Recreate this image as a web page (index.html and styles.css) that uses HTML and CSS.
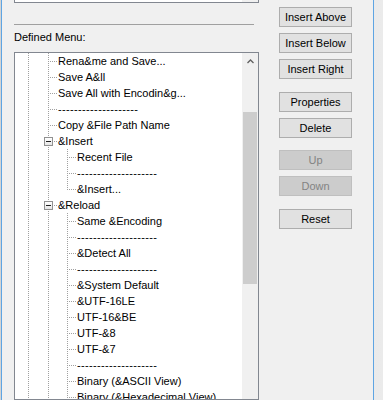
FILE: index.html
```html
<!DOCTYPE html>
<html lang="en">
  <head>
    <meta charset="UTF-8">
    <meta name="viewport" content="width=device-width, initial-scale=1.0">
    <title>Customize Menu</title>
    <link rel="stylesheet" href="styles.css">
  </head>
  <body>
    <main class="window">
      <section class="left-pane">
        <div class="list-box">
          <div class="list-rows">
            <div class="list-item">Sync Vertical Scroll (&amp;y)</div>
          </div>
          <div class="list-scroll"></div>
        </div>

        <hr class="separator">

        <div class="label">Defined Menu:</div>

        <div class="tree-box">
          <div class="tree">
            <div class="row"><span class="g v"></span><span class="g t"></span><span class="text">Rena&amp;me and Save...</span></div>
            <div class="row"><span class="g v"></span><span class="g t"></span><span class="text">Save A&amp;ll</span></div>
            <div class="row"><span class="g v"></span><span class="g t"></span><span class="text">Save All with Encodin&amp;g...</span></div>
            <div class="row"><span class="g v"></span><span class="g t"></span><span class="text sep">--------------------</span></div>
            <div class="row"><span class="g v"></span><span class="g t"></span><span class="text">Copy &amp;File Path Name</span></div>
            <div class="row"><span class="g v"></span><span class="g t"><i class="box"></i></span><span class="text">&amp;Insert</span></div>
            <div class="row"><span class="g v"></span><span class="g v"></span><span class="g t"></span><span class="text">Recent File</span></div>
            <div class="row"><span class="g v"></span><span class="g v"></span><span class="g t"></span><span class="text sep">--------------------</span></div>
            <div class="row"><span class="g v"></span><span class="g v"></span><span class="g l"></span><span class="text">&amp;Insert...</span></div>
            <div class="row"><span class="g v"></span><span class="g t"><i class="box"></i></span><span class="text">&amp;Reload</span></div>
            <div class="row"><span class="g v"></span><span class="g v"></span><span class="g t"></span><span class="text">Same &amp;Encoding</span></div>
            <div class="row"><span class="g v"></span><span class="g v"></span><span class="g t"></span><span class="text sep">--------------------</span></div>
            <div class="row"><span class="g v"></span><span class="g v"></span><span class="g t"></span><span class="text">&amp;Detect All</span></div>
            <div class="row"><span class="g v"></span><span class="g v"></span><span class="g t"></span><span class="text sep">--------------------</span></div>
            <div class="row"><span class="g v"></span><span class="g v"></span><span class="g t"></span><span class="text">&amp;System Default</span></div>
            <div class="row"><span class="g v"></span><span class="g v"></span><span class="g t"></span><span class="text">&amp;UTF-16LE</span></div>
            <div class="row"><span class="g v"></span><span class="g v"></span><span class="g t"></span><span class="text">UTF-16&amp;BE</span></div>
            <div class="row"><span class="g v"></span><span class="g v"></span><span class="g t"></span><span class="text">UTF-&amp;8</span></div>
            <div class="row"><span class="g v"></span><span class="g v"></span><span class="g t"></span><span class="text">UTF-&amp;7</span></div>
            <div class="row"><span class="g v"></span><span class="g v"></span><span class="g t"></span><span class="text sep">--------------------</span></div>
            <div class="row"><span class="g v"></span><span class="g v"></span><span class="g t"></span><span class="text">Binary (&amp;ASCII View)</span></div>
            <div class="row"><span class="g v"></span><span class="g v"></span><span class="g t"></span><span class="text">Binary (&amp;Hexadecimal View)</span></div>
          </div>

          <div class="scrollbar">
            <div class="arrow">
              <svg width="7" height="5" viewBox="0 0 7 5"><polyline points="0.5,4 3.5,1 6.5,4" fill="none" stroke="#606060" stroke-width="1.3"/></svg>
            </div>
            <div class="thumb"></div>
          </div>
        </div>
      </section>

      <section class="buttons">
        <button>Insert Above</button>
        <button>Insert Below</button>
        <button>Insert Right</button>
        <button class="group">Properties</button>
        <button>Delete</button>
        <button class="group-small" disabled>Up</button>
        <button disabled>Down</button>
        <button class="group">Reset</button>
      </section>
    </main>
  </body>
</html>
```

FILE: styles.css
```css
html, body {
  margin: 0;
  padding: 0;
  height: 400px;
  overflow: hidden;
}

body {
  background: linear-gradient(to right, #d4d4d4, #ebebeb);
  font-family: "Liberation Sans", Arial, sans-serif;
  font-size: 11px;
  color: #000000;
}

.window {
  display: flex;
  width: 359px;
  height: 400px;
  margin-left: 1px;
  padding-left: 12px;
  background-color: #f0f0f0;
  border-left: 1px solid #5fa5e3;
  border-right: 1px solid #5fa5e3;
}

.left-pane {
  width: 245px;
  display: flex;
  flex-direction: column;
}

/* list box cut off at the top of the picture */
.list-box {
  display: flex;
  height: 41px;
  margin-top: -37px;
  box-sizing: border-box;
  background-color: #ffffff;
  border: 1px solid #828790;
}

.list-rows {
  flex: 1;
  display: flex;
  flex-direction: column;
  justify-content: flex-end;
  padding: 0 0 1px 4px;
}

.list-item {
  line-height: 14px;
}

.list-scroll {
  width: 16px;
  background-color: #f0f0f0;
}

.separator {
  width: 240px;
  height: 0;
  margin: 21px 0 0 0;
  border: none;
  border-top: 1px solid #a0a0a0;
}

.label {
  line-height: 14px;
  margin-top: 5px;
}

.tree-box {
  display: flex;
  height: 360px;
  margin-top: 8px;
  box-sizing: border-box;
  background-color: #ffffff;
  border: 1px solid #828790;
  overflow: hidden;
}

.tree {
  flex: 1;
  padding-left: 3px;
}

.row {
  display: flex;
  height: 16px;
  line-height: 16px;
  white-space: nowrap;
}

.g {
  position: relative;
  width: 19px;
  height: 16px;
  flex: none;
}

.g:first-child {
  width: 20px;
}

.v::before, .t::before, .l::before {
  content: "";
  position: absolute;
  left: 10px;
  top: 0;
  width: 1px;
  height: 16px;
  background: repeating-linear-gradient(to bottom, #a0a0a0 0 1px, transparent 1px 2px);
}

.l::before {
  height: 9px;
}

.t::after, .l::after {
  content: "";
  position: absolute;
  left: 11px;
  top: 8px;
  width: 8px;
  height: 1px;
  background: repeating-linear-gradient(to right, transparent 0 1px, #a0a0a0 1px 2px);
}

.box {
  position: absolute;
  left: 6px;
  top: 4px;
  width: 7px;
  height: 7px;
  z-index: 1;
  border: 1px solid #919191;
  background: linear-gradient(to bottom, #ffffff, #e6e6e6);
}

.box::after {
  content: "";
  position: absolute;
  left: 1px;
  top: 3px;
  width: 5px;
  height: 1px;
  background-color: #1e1e1e;
}

.text {
  padding-left: 1px;
}

.sep {
  letter-spacing: 0.35px;
}

.scrollbar {
  width: 16px;
  flex: none;
  background-color: #f0f0f0;
}

.arrow {
  display: flex;
  justify-content: center;
  align-items: center;
  height: 17px;
}

.arrow svg {
  display: block;
}

.thumb {
  width: 14px;
  height: 172px;
  margin: 42px 0 0 1px;
  background-color: #cdcdcd;
}

.buttons {
  display: flex;
  flex-direction: column;
  gap: 6px;
  width: 73px;
  margin-left: 20px;
  padding-top: 7px;
}

button {
  display: block;
  width: 73px;
  height: 20px;
  padding: 0;
  font-family: "Liberation Sans", Arial, sans-serif;
  font-size: 11px;
  color: #000000;
  background-color: #e1e1e1;
  border: 1px solid #adadad;
  border-radius: 0;
}

button:disabled {
  color: #838383;
  background-color: #cccccc;
  border-color: #bfbfbf;
}

.group {
  margin-top: 7px;
}

.group-small {
  margin-top: 6px;
}
```
